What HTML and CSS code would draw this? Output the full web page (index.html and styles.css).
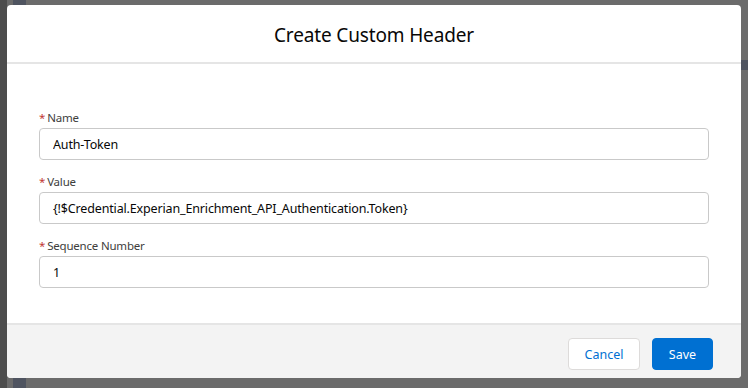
FILE: index.html
```html
<!doctype html>
<html lang="en">
<head>
	<meta charset="UTF-8">
	<title>Create Custom Header</title>
	<link rel="stylesheet" href="styles.css">
</head>
<body>
	<div class="backdrop">
		<span class="shade shadeTop"></span>
		<span class="shade shadeBottom"></span>
		<span class="shade shadeRight"></span>
		<div class="modal">
			<div class="modalHead">
				<h2>Create Custom Header</h2>
			</div>
			<div class="modalBody">
				<div class="field">
					<label><abbr>*</abbr>Name</label>
					<input type="text" value="Auth-Token">
				</div>
				<div class="field">
					<label><abbr>*</abbr>Value</label>
					<input type="text" value="{!$Credential.Experian_Enrichment_API_Authentication.Token}">
				</div>
				<div class="field">
					<label><abbr>*</abbr>Sequence Number</label>
					<input type="text" value="1">
				</div>
			</div>
			<div class="modalFoot">
				<button class="btn btnNeutral">Cancel</button>
				<button class="btn btnBrand">Save</button>
			</div>
		</div>
	</div>
</body>
</html>
```
FILE: styles.css
```css
* { margin: 0; padding: 0; box-sizing: border-box;}
body { width: 748px; height: 388px; overflow: hidden; font-family: "Noto Sans", "Open Sans", sans-serif; color: #080707; background: #6b6b6b;}
.backdrop { position: relative; height: 388px; padding: 5px 7px 0 7px; background: linear-gradient(to right, #4d4d4d 0, #4d4d4d 7px, #6b6b6b 7px);}
.shade { position: absolute; background: #4f5460;}
.shadeTop { left: 13px; top: 0; width: 13px; height: 5px;}
.shadeBottom { left: 13px; bottom: 0; width: 13px; height: 10px;}
.shadeRight { right: 0; top: 60px; width: 7px; height: 10px;}
.modal { width: 734px; height: 373px; background: #fff; border-radius: 4px; display: flex; flex-direction: column; overflow: hidden;}
.modalHead { height: 59px; border-bottom: 2px solid #e5e5e5; display: flex; align-items: center; justify-content: center; padding-top: 2px;}
.modalHead h2 { font-size: 19px; font-weight: 400; color: #080707; letter-spacing: -0.15px;}
.modalBody { flex: 1; padding: 45px 32px 0 32px; display: flex; flex-direction: column; gap: 13px;}
.field label { display: block; height: 19px; font-size: 11.5px; line-height: 18px; color: #3e3e3c; letter-spacing: -0.2px;}
.field abbr { color: #c23934; text-decoration: none; margin-right: 2px;}
.field input { display: block; width: 100%; height: 32px; border: 1px solid #c9c9c9; border-radius: 4px; padding: 0 13px; font-family: inherit; font-size: 12.5px; letter-spacing: -0.15px; color: #080707; background: #fff; outline: none;}
.modalFoot { height: 55px; border-top: 2px solid #e5e5e5; background: #f3f3f3; display: flex; justify-content: flex-end; align-items: flex-start; padding: 13px 28px 0 0; gap: 12px;}
.btn { height: 32px; border-radius: 4px; font-family: inherit; font-size: 12.5px; padding: 0 14px; cursor: pointer;}
.btnNeutral { width: 72px; background: #fff; border: 1px solid #dddbda; color: #0070d2;}
.btnBrand { width: 61px; background: #0070d2; border: 1px solid #0070d2; color: #fff;}
```
